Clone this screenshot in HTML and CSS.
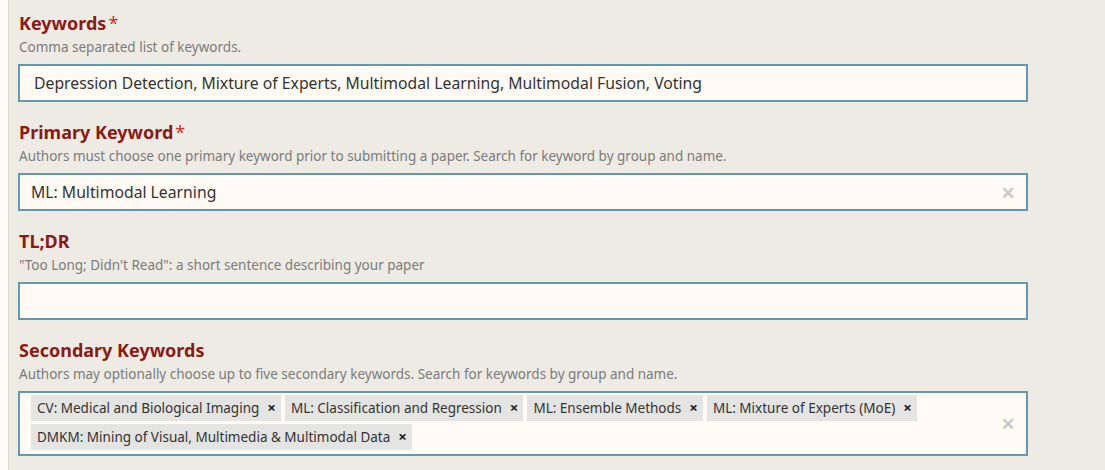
FILE: index.html
```html
<!DOCTYPE html>
<html>
<head>
<meta charset="utf-8">
<link rel="stylesheet" href="styles.css">
</head>
<body>
<div class="page">
  <div class="strip"></div>
  <div class="content">
    <div class="field">
      <div class="label">Keywords<span class="req">*</span></div>
      <div class="hint">Comma separated list of keywords.</div>
      <div class="input text-input">Depression Detection, Mixture of Experts, Multimodal Learning, Multimodal Fusion, Voting</div>
    </div>
    <div class="field">
      <div class="label">Primary Keyword<span class="req">*</span></div>
      <div class="hint">Authors must choose one primary keyword prior to submitting a paper. Search for keyword by group and name.</div>
      <div class="input select-input">
        <span class="value">ML: Multimodal Learning</span>
        <span class="clear">✕</span>
      </div>
    </div>
    <div class="field">
      <div class="label">TL;DR</div>
      <div class="hint">"Too Long; Didn't Read": a short sentence describing your paper</div>
      <div class="input text-input"></div>
    </div>
    <div class="field">
      <div class="label">Secondary Keywords</div>
      <div class="hint">Authors may optionally choose up to five secondary keywords. Search for keywords by group and name.</div>
      <div class="input multi-input">
        <div class="tags">
          <span class="tag">CV: Medical and Biological Imaging<span class="tag-x">×</span></span>
          <span class="tag">ML: Classification and Regression<span class="tag-x">×</span></span>
          <span class="tag">ML: Ensemble Methods<span class="tag-x">×</span></span>
          <span class="tag">ML: Mixture of Experts (MoE)<span class="tag-x">×</span></span>
          <span class="tag">DMKM: Mining of Visual, Multimedia &amp; Multimodal Data<span class="tag-x">×</span></span>
        </div>
        <span class="clear">✕</span>
      </div>
    </div>
  </div>
</div>
</body>
</html>
```

FILE: styles.css
```css
html, body {
  margin: 0;
  padding: 0;
  background: #eeebe5;
  font-family: "Noto Sans", "Open Sans", sans-serif;
}
.page {
  display: flex;
  min-height: 470px;
}
.strip {
  width: 8px;
  flex: none;
  background: #fffbf6;
  border-right: 1px solid #dcd9d3;
}
.content {
  flex: 1;
  padding: 11px 0 0 9px;
}
.field {
  margin-bottom: 18px;
  width: 1010px;
}
.label {
  font-size: 18px;
  line-height: 24px;
  font-weight: 700;
  color: #8b1a12;
  padding-left: 1px;
}
.req {
  color: #d0302b;
  font-weight: 400;
  margin-left: 2px;
}
.hint {
  font-size: 13.5px;
  line-height: 20px;
  margin-top: 2px;
  color: #7b7b7b;
  padding-left: 1px;
}
.input {
  margin-top: 7px;
  box-sizing: border-box;
  border: 2px solid #6399af;
  background: #fffaf4;
  color: #333;
  font-size: 15.75px;
}
.text-input {
  height: 38px;
  line-height: 35px;
  padding: 0 14px;
}
.select-input {
  height: 38px;
  display: flex;
  align-items: center;
  padding: 0 11px;
}
.value {
  flex: 1;
}
.clear {
  color: #c9c9c9;
  font-size: 17px;
  font-weight: 700;
  margin-right: 0;
}
.multi-input {
  height: 65px;
  display: flex;
  align-items: center;
  padding: 2px 11px 3px 11px;
}
.tags {
  flex: 1;
  align-self: flex-start;
  display: flex;
  flex-wrap: wrap;
  gap: 3px 4px;
}
.tag {
  background: #e4e4e2;
  font-size: 13.5px;
  line-height: 25px;
  height: 26px;
  padding: 0 5px 0 6px;
  color: #333;
}
.tag-x {
  font-weight: 700;
  margin-left: 8px;
  font-size: 15px;
  color: #222;
}
```
